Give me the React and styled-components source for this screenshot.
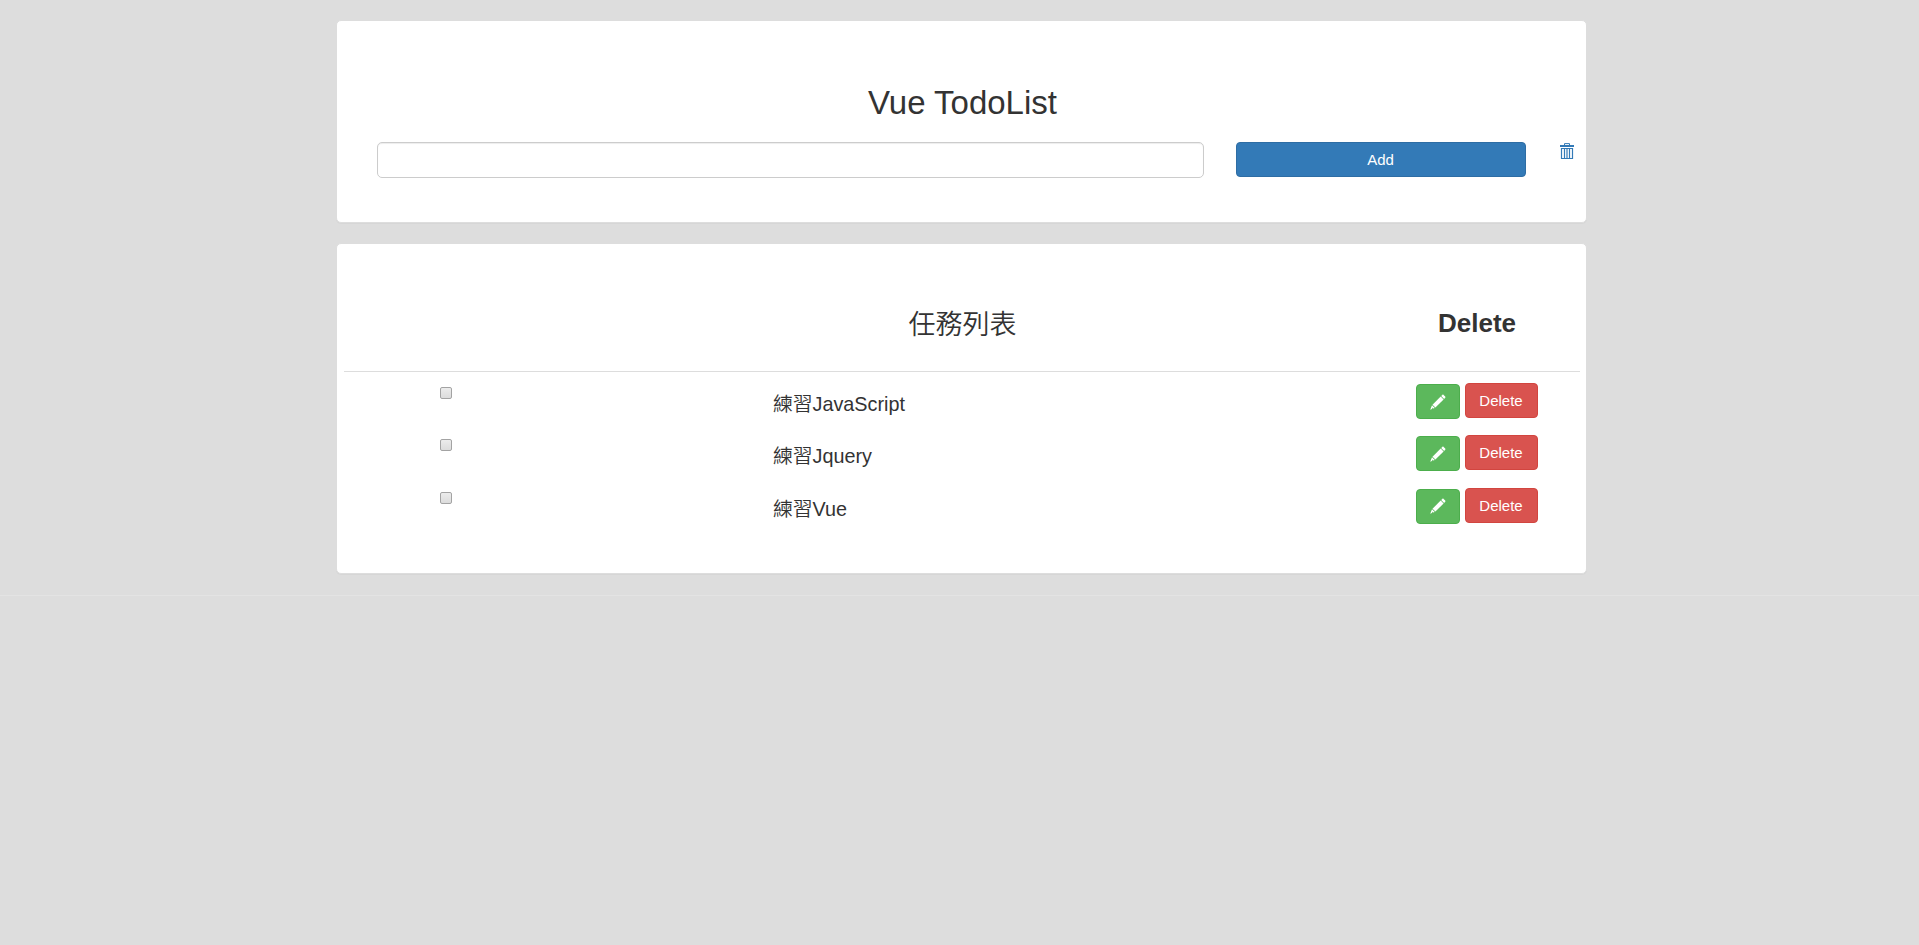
import React, { useState } from "react";
import styled, { createGlobalStyle } from "styled-components";

const Global = createGlobalStyle`
  * { box-sizing: border-box; }
  body {
    margin: 0;
    background: #ddd;
    color: #333;
    font-family: "Liberation Sans", "Noto Sans CJK TC", sans-serif;
    font-size: 15px;
    line-height: 1.43;
  }
`;

const Page = styled.main`
  display: flex;
  flex-direction: column;
  align-items: center;
  gap: 20px;
  padding: 20px 0;
  height: 596px;
  border-bottom: 1px solid #e3e3e3;
`;

const Panel = styled.section`
  width: 1251px;
  height: ${(p) => p.$height}px;
  margin-left: 4px;
  padding: ${(p) => p.$padding};
  background: #fff;
  border: 1px solid #ddd;
  border-radius: 5px;
  box-shadow: 0 1px 1px rgba(0, 0, 0, 0.03);
`;

const Title = styled.h2`
  margin: 0 0 21px;
  padding-left: 2px;
  font-size: 33px;
  font-weight: 400;
  line-height: 36px;
  text-align: center;
`;

const Form = styled.form`
  display: flex;
  align-items: flex-start;
  padding-left: 40px;
`;

const Input = styled.input`
  width: 827px;
  height: 36px;
  margin-right: 32px;
  padding: 6px 12px;
  font: inherit;
  border: 1px solid #ccc;
  border-radius: 5px;
  outline: none;
  box-shadow: inset 0 1px 1px rgba(0, 0, 0, 0.075);
`;

const colors = {
  primary: ["#337ab7", "#2e6da4"],
  success: ["#5cb85c", "#4cae4c"],
  danger: ["#d9534f", "#d2453f"],
};

const Button = styled.button`
  display: flex;
  align-items: center;
  justify-content: center;
  width: ${(p) => p.$width}px;
  height: 35px;
  padding: 0 1px 0 0;
  font-family: inherit;
  font-size: 15px;
  line-height: 21px;
  color: #fff;
  background: ${(p) => colors[p.$kind][0]};
  border: 1px solid ${(p) => colors[p.$kind][1]};
  border-radius: 4px;
`;

const ClearLink = styled.a`
  display: flex;
  margin: 1px 0 0 34px;
  color: #337ab7;
`;

const Columns = styled.div`
  display: grid;
  grid-template-columns: 204px 826px 206px;
`;

const HeadRow = styled(Columns)`
  height: 128px;
  padding-top: 57px;
  border-bottom: 1px solid #ddd;
  text-align: center;
`;

const ListName = styled.span`
  padding-left: 3px;
  font-size: 27px;
  font-weight: 350;
  line-height: 48px;
`;

const DeleteName = styled.span`
  font-size: 26px;
  font-weight: 700;
  line-height: 44px;
`;

const Row = styled(Columns)`
  height: 52.4px;
`;

const Check = styled.input`
  appearance: none;
  justify-self: center;
  width: 12px;
  height: 12px;
  margin: 15px 0 0;
  border: 1px solid #a3a3a3;
  border-radius: 2px;
  background: linear-gradient(#ececec, #dcdcdc);
  &:checked { background: #337ab7; }
`;

const Task = styled.span`
  padding: 17px 0 0 225px;
  font-size: 19.8px;
  font-weight: 350;
  line-height: 30px;
`;

const Actions = styled.div`
  display: flex;
  align-items: flex-start;
  justify-content: center;
  gap: 5px;
  padding-top: 11px;
  & > :first-child { margin-top: 1px; }
`;

const Trash = () => (
  <svg width="14" height="16" viewBox="0 0 14 16" fill="none" stroke="currentColor">
    <path d="M4.500 2.500V.600h5v1.900" />
    <path d="M0 3h14" strokeWidth="2" />
    <path d="M1.500 5.500h11v10h-11z" strokeWidth="1.200" />
    <path d="M4.500 5.500v10M7 5.500v10M9.500 5.500v10" strokeWidth="1.200" />
  </svg>
);

const Pencil = () => (
  <svg width="16" height="16" viewBox="0 0 16 16" fill="#fff">
    <path d="M12.300.9c.4-.4.9-.4 1.300 0l1.600 1.600c.4.4.4.9 0 1.300l-1.100 1.100-2.900-2.900z" />
    <path d="M10.700 2.500l2.900 2.900-8.200 8.200-2.900-2.900z" />
    <path d="M2 11.300l2.800 2.800-1.600.5-.8-.8-.6.200.7.800-2.300.9z" />
  </svg>
);

const tasks = ["練習JavaScript", "練習Jquery", "練習Vue"];

export default function App() {
  const [text, setText] = useState("");
  return (
    <>
      <Global />
      <Page>
        <Panel $height={203} $padding="64px 0 0">
          <Title>Vue TodoList</Title>
          <Form onSubmit={(e) => e.preventDefault()}>
            <Input value={text} onChange={(e) => setText(e.target.value)} />
            <Button $kind="primary" $width={290}>Add</Button>
            <ClearLink><Trash /></ClearLink>
          </Form>
        </Panel>
        <Panel $height={331} $padding="0 6px 0 7px">
          <HeadRow>
            <span />
            <ListName>任務列表</ListName>
            <DeleteName>Delete</DeleteName>
          </HeadRow>
          {tasks.map((task) => (
            <Row key={task}>
              <Check type="checkbox" />
              <Task>{task}</Task>
              <Actions>
                <Button $kind="success" $width={44}><Pencil /></Button>
                <Button $kind="danger" $width={73}>Delete</Button>
              </Actions>
            </Row>
          ))}
        </Panel>
      </Page>
    </>
  );
}
